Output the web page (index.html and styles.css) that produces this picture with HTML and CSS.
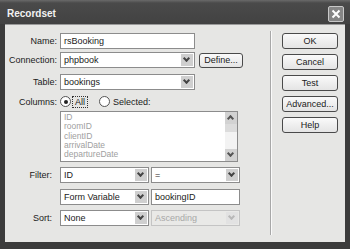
FILE: index.html
```html
<!DOCTYPE html>
<html lang="en">
<head>
  <meta charset="UTF-8" />
  <title>Recordset</title>
  <link rel="stylesheet" href="styles.css">
</head>
<body>

  <div class="dialog">
    <div class="titlebar">
      <span class="title">Recordset</span>
      <span class="close">
        <svg width="10" height="10" viewBox="0 0 10 10"><path d="M1.5 1.5 L8.5 8.5 M8.5 1.5 L1.5 8.5" stroke="#fff" stroke-width="2" fill="none"/></svg>
      </span>
    </div>

    <div class="content">
      <div class="form">
        <div class="row row-name">
          <span class="lbl">Name:</span>
          <div class="field w-wide">rsBooking</div>
        </div>
        <div class="row row-conn">
          <span class="lbl">Connection:</span>
          <div class="field select w-wide">phpbook<span class="arrow"></span></div>
          <div class="btn btn-define">Define...</div>
        </div>
        <div class="row row-table">
          <span class="lbl">Table:</span>
          <div class="field select w-wide">bookings<span class="arrow"></span></div>
        </div>
        <div class="row row-cols">
          <span class="lbl">Columns:</span>
          <span class="radio on"></span>
          <span class="focus">All</span>
          <span class="radio"></span>
          <span class="radio-text">Selected:</span>
        </div>
        <div class="row row-list">
          <span class="lbl"></span>
          <div class="listbox">
            <div class="items">
              <div>ID</div>
              <div>roomID</div>
              <div>clientID</div>
              <div>arrivalDate</div>
              <div>departureDate</div>
            </div>
            <div class="scroll">
              <span class="sb-btn up"></span>
              <span class="sb-thumb"></span>
              <span class="sb-track"></span>
              <span class="sb-btn down"></span>
            </div>
          </div>
        </div>
        <div class="row row-filter">
          <span class="lbl lbl-low">Filter:</span>
          <div class="field select w-half">ID<span class="arrow"></span></div>
          <div class="field select w-half2">=<span class="arrow"></span></div>
        </div>
        <div class="row row-var">
          <span class="lbl"></span>
          <div class="field select w-half">Form Variable<span class="arrow"></span></div>
          <div class="field w-half2">bookingID</div>
        </div>
        <div class="row row-sort">
          <span class="lbl lbl-low">Sort:</span>
          <div class="field select w-half">None<span class="arrow"></span></div>
          <div class="field select disabled w-half2">Ascending<span class="arrow"></span></div>
        </div>
      </div>

      <div class="sep"></div>

      <div class="buttons">
        <div class="btn">OK</div>
        <div class="btn">Cancel</div>
        <div class="btn">Test</div>
        <div class="btn">Advanced...</div>
        <div class="btn">Help</div>
      </div>
    </div>
  </div>

</body>
</html>
```

FILE: styles.css
```css
html, body {
  margin: 0;
  padding: 0;
  background: #3a3a3a;
  font-family: 'Liberation Sans', Arial, sans-serif;
  font-size: 9px;
  color: #1a1a1a;
}

.dialog {
  width: 350px;
  height: 249px;
  box-sizing: border-box;
  padding: 0 5px 7px 5px;
  background: #3b3b3b;
  display: flex;
  flex-direction: column;
}

.titlebar {
  height: 24px;
  margin: 0 -5px;
  padding: 0 7px;
  background: linear-gradient(to bottom, #6a6a6a, #4a4a4a 3px, #424242);
  display: flex;
  align-items: center;
  justify-content: space-between;
}

.title {
  color: #f2f2f2;
  font-weight: bold;
  font-size: 10px;
  padding-top: 2px;
}

.close {
  width: 14px;
  height: 14px;
  margin-top: 3px;
  margin-right: -1px;
  border: 1px solid #c8c8c8;
  border-radius: 2px;
  background: #858585;
  display: flex;
  align-items: center;
  justify-content: center;
}

.content {
  flex: 1;
  background: #e6e6e4;
  border-top: 1px solid #9a9a9a;
  display: flex;
}

.form {
  width: 242px;
  padding-top: 8px;
  display: flex;
  flex-direction: column;
}

.row {
  display: flex;
  align-items: center;
}

.lbl {
  width: 52px;
  margin-right: 3px;
  text-align: right;
  flex-shrink: 0;
}

.lbl-low {
  width: 47px;
  margin-right: 8px;
}

.field {
  position: relative;
  height: 16px;
  box-sizing: border-box;
  border: 1px solid #8c8c8c;
  background: #fff;
  padding: 0 3px;
  line-height: 14px;
  white-space: nowrap;
}

.select {
  padding-right: 16px;
}

.arrow {
  position: absolute;
  right: 1px;
  top: 1px;
  bottom: 1px;
  width: 12px;
  background: #cfcfcf;
}

.arrow::after {
  content: "";
  position: absolute;
  left: 3px;
  top: 2px;
  width: 3px;
  height: 3px;
  border-right: 2px solid #444;
  border-bottom: 2px solid #444;
  transform: rotate(45deg);
}

.disabled {
  border-color: #c4c4c4;
  background: #e9e9e7;
  color: #a8a8a8;
}

.disabled .arrow {
  background: #e2e2e2;
}

.disabled .arrow::after {
  border-color: #b8b8b8;
}

.w-wide { width: 135px; }
.w-half { width: 89px; }
.w-half2 { width: 89px; margin-left: 2px; }

.row-conn { margin-top: 3px; }
.row-table { margin-top: 6px; }
.row-cols { margin-top: 5px; height: 13px; }
.row-list { margin-top: 3px; }
.row-filter { margin-top: 5px; }
.row-var { margin-top: 6px; }
.row-sort { margin-top: 5px; }

.btn {
  height: 16px;
  box-sizing: border-box;
  border: 1px solid #4a4a4a;
  border-radius: 3px;
  background: linear-gradient(to bottom, #fafafa, #e4e4e4);
  text-align: center;
  line-height: 14px;
}

.btn-define {
  width: 44px;
  margin-left: 4px;
  height: 15px;
  line-height: 13px;
}

.radio {
  width: 9px;
  height: 9px;
  border: 1px solid #555;
  border-radius: 50%;
  background: #fff;
  position: relative;
}

.radio.on::after {
  content: "";
  position: absolute;
  left: 2.5px;
  top: 2.5px;
  width: 4px;
  height: 4px;
  border-radius: 50%;
  background: #222;
}

.focus {
  margin-left: 1px;
  padding: 0 2px;
  border: 1px dotted #333;
  line-height: 10px;
  margin-right: 11px;
}

.radio-text {
  margin-left: 3px;
}

.listbox {
  width: 178px;
  height: 51px;
  box-sizing: border-box;
  border: 1px solid #8c8c8c;
  background: #fff;
  display: flex;
}

.items {
  flex: 1;
  padding: 1px 3px;
  color: #a0a0a0;
  line-height: 9.3px;
  font-size: 8.5px;
}

.scroll {
  width: 12px;
  display: flex;
  flex-direction: column;
  background: #f3f3f3;
}

.sb-btn {
  height: 12px;
  background: #d2d2d2;
  position: relative;
}

.sb-thumb {
  height: 8px;
  background: #dcdcdc;
}

.sb-btn::after {
  content: "";
  position: absolute;
  left: 3px;
  width: 3px;
  height: 3px;
  border-right: 2px solid #555;
  border-bottom: 2px solid #555;
}

.sb-btn.up::after {
  top: 4px;
  transform: rotate(-135deg);
}

.sb-btn.down::after {
  top: 2px;
  transform: rotate(45deg);
}

.sb-track {
  flex: 1;
}

.sep {
  width: 1px;
  margin: 6px 0 7px 23px;
  background: #a8a8a8;
  border-right: 1px solid #fafafa;
}

.buttons {
  margin-left: 10px;
  padding-top: 8px;
  width: 56px;
  display: flex;
  flex-direction: column;
  gap: 5px;
}
```
